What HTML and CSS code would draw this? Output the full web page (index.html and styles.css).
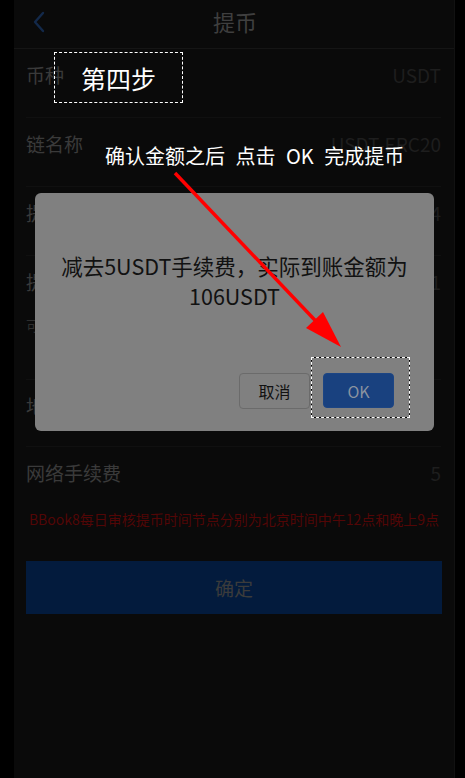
FILE: index.html
```html
<!DOCTYPE html>
<html lang="zh-CN">
<head>
<meta charset="utf-8">
<title>提币</title>
<link rel="stylesheet" href="styles.css">
</head>
<body>
<div class="app">
  <header class="nav">
    <span class="back">
      <svg width="14" height="22" viewBox="0 0 14 22"><path d="M11 2 L3 11 L11 20" fill="none" stroke="#13294a" stroke-width="2.4" stroke-linecap="round" stroke-linejoin="round"/></svg>
    </span>
    <h1 class="title">提币</h1>
  </header>
  <div class="form">
    <div class="row"><span class="label">币种</span><span class="value">USDT</span></div>
    <div class="row"><span class="label">链名称</span><span class="value">USDT-ERC20</span></div>
    <div class="row"><span class="label">提币地址</span><span class="value">0x8f3c…a2d4</span></div>
    <div class="row row-tall">
      <div class="row-main"><span class="label">提币数量</span><span class="value">111</span></div>
      <div class="sub">可用余额：111 USDT</div>
    </div>
    <div class="row row-addr"><span class="label">地址备注</span></div>
    <div class="row row-last"><span class="label">网络手续费</span><span class="value">5</span></div>
  </div>
  <p class="notice">BBook8每日审核提币时间节点分别为北京时间中午12点和晚上9点</p>
  <button class="submit">确定</button>
</div>

<div class="dialog">
  <p class="dialog-msg">减去5USDT手续费，实际到账金额为106USDT</p>
  <div class="dialog-actions">
    <button class="btn btn-cancel">取消</button>
    <button class="btn btn-ok">OK</button>
  </div>
</div>

<div class="annot step">第四步</div>
<div class="tip">确认金额之后 点击 OK 完成提币</div>
<div class="annot okbox"></div>
<svg class="arrow" width="465" height="778" viewBox="0 0 465 778">
  <line x1="175" y1="173" x2="330" y2="336" stroke="#ff0000" stroke-width="3.5"/>
  <polygon points="341,347 306,328 323,312" fill="#ff0000"/>
</svg>
</body>
</html>
```
FILE: styles.css
```css
* { box-sizing: border-box; }
html, body { margin: 0; padding: 0; }
body {
  background: #000;
  font-family: "Noto Sans CJK SC", "Microsoft YaHei", sans-serif;
  width: 465px;
  height: 778px;
  overflow: hidden;
  position: relative;
}
.app {
  width: 441px;
  margin-left: 14px;
  height: 778px;
  background: #0a0a0a;
  border-right: 1px solid #111;
}
.nav {
  height: 49px;
  border-bottom: 1px solid #151515;
  display: flex;
  align-items: flex-start;
  justify-content: center;
  padding-top: 6px;
  position: relative;
}
.back {
  position: absolute;
  left: 18px;
  top: 11px;
  display: flex;
}
.title {
  margin: 0;
  font-size: 22px;
  font-weight: normal;
  color: #3f3f3f;
  line-height: 30px;
  padding-left: 2px;
}
.form { padding: 0 13px 0 12px; }
.row {
  height: 69px;
  padding-top: 13px;
  display: flex;
  justify-content: space-between;
  align-items: flex-start;
  line-height: 26px;
  border-bottom: 1px solid #101010;
}
.row-tall {
  height: 124px;
  display: block;
}
.row-main { display: flex; justify-content: space-between; }
.row-addr { height: 67px; }
.row-last { height: 55px; border-bottom: none; }
.label { font-size: 19px; color: #3a3a3a; }
.value { font-size: 19px; color: #1e1e1e; }
.sub {
  margin-top: 20px;
  font-size: 14px;
  line-height: 20px;
  color: #2e2e2e;
}
.notice {
  margin: 7px 0 0;
  text-align: center;
  font-size: 14px;
  line-height: 20px;
  color: #520606;
}
.submit {
  display: block;
  margin: 32px 13px 0 12px;
  width: 416px;
  height: 53px;
  border: none;
  background: #031b3d;
  color: #3b3b3b;
  font-family: inherit;
  font-size: 19px;
}

.dialog {
  position: absolute;
  left: 35px;
  top: 193px;
  width: 399px;
  height: 238px;
  background: #808080;
  border-radius: 6px;
  display: flex;
  flex-direction: column;
  justify-content: space-between;
  padding: 58px 18px 22px;
}
.dialog-msg {
  margin: 0;
  text-align: center;
  font-size: 21.5px;
  line-height: 30px;
  color: #111;
}
.dialog-actions {
  display: flex;
  justify-content: flex-end;
  gap: 13px;
  padding-right: 22px;
}
.btn {
  width: 71px;
  height: 36px;
  border-radius: 4px;
  font-family: inherit;
  font-size: 16px;
  padding: 0;
}
.btn-cancel {
  background: #808080;
  border: 1px solid #6b6b6b;
  color: #111;
}
.btn-ok {
  background: #19417f;
  border: 1px solid #1c4584;
  color: #8a93a0;
  height: 35px;
}

.annot {
  position: absolute;
  border: 1px solid #000;
}
.annot::before {
  content: "";
  position: absolute;
  inset: -1px;
  border: 1px dashed #fff;
}
.step {
  left: 54px;
  top: 52px;
  width: 129px;
  height: 51px;
  display: flex;
  align-items: center;
  justify-content: center;
  color: #fff;
  font-size: 25px;
  border-color: transparent;
}
.okbox {
  left: 311px;
  top: 357px;
  width: 99px;
  height: 61px;
}
.tip {
  position: absolute;
  left: 105px;
  top: 142px;
  color: #fff;
  font-size: 20px;
  line-height: 28px;
  white-space: pre;
  word-spacing: 6px;
}
.arrow {
  position: absolute;
  left: 0;
  top: 0;
  pointer-events: none;
}
```
